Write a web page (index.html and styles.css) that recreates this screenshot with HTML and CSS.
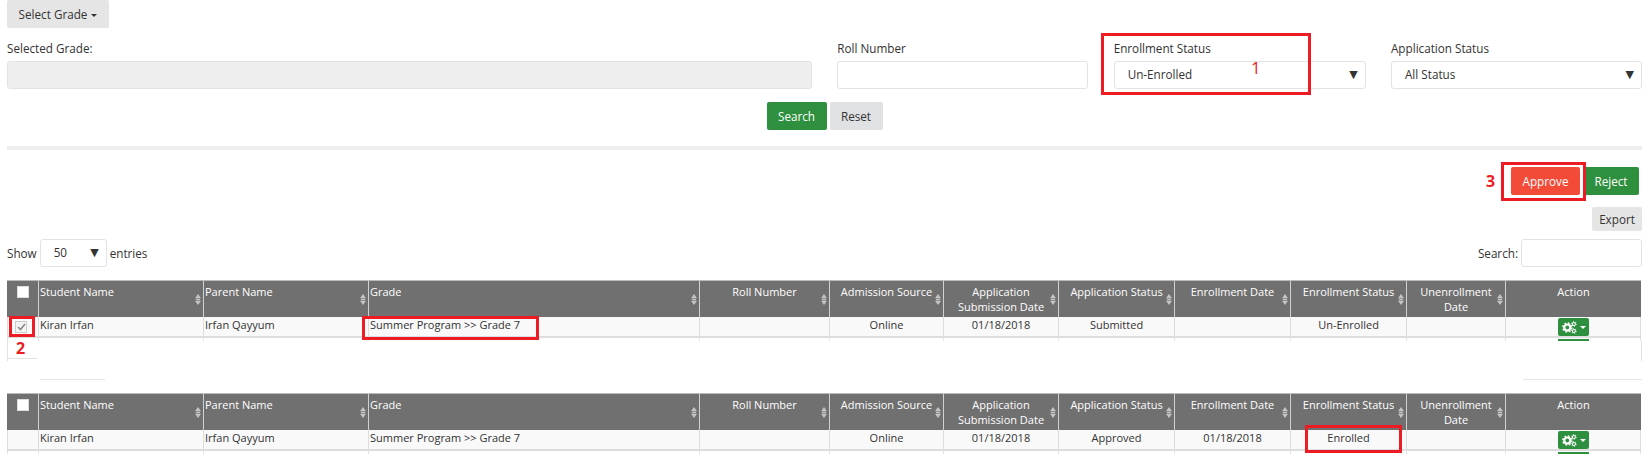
FILE: index.html
```html
<!DOCTYPE html>
<html lang="en">
<head>
<meta charset="utf-8">
<title>Enrollment</title>
<link rel="stylesheet" href="styles.css">
</head>
<body>
<svg class="defs" width="0" height="0" aria-hidden="true">
  <symbol id="sort" viewBox="0 0 6 11"><path d="M3 0 6 4.2H0ZM0 6.8h6L3 11Z" fill="#c4c4c4"/><rect x="1" y="4.8" width="4" height="1.4" fill="#c4c4c4"/></symbol>
  <symbol id="cogs" viewBox="0 0 17 14">
    <circle cx="6" cy="7" r="3.4" fill="none" stroke="#fff" stroke-width="2.4"/>
    <circle cx="6" cy="7" r="5" fill="none" stroke="#fff" stroke-width="1.8" stroke-dasharray="2 1.93"/>
    <circle cx="13.5" cy="3" r="1.7" fill="none" stroke="#fff" stroke-width="1.2"/>
    <circle cx="13.5" cy="3" r="2.7" fill="none" stroke="#fff" stroke-width="1" stroke-dasharray="1.2 1.4"/>
    <circle cx="13.5" cy="11" r="1.7" fill="none" stroke="#fff" stroke-width="1.2"/>
    <circle cx="13.5" cy="11" r="2.7" fill="none" stroke="#fff" stroke-width="1" stroke-dasharray="1.2 1.4"/>
  </symbol>
</svg>

<div class="top"><button class="btn btn-grey btn-grade">Select Grade <span class="caret"></span></button></div>

<div class="filters">
  <div class="field field-grade"><label>Selected Grade:</label><div class="input input-disabled"></div></div>
  <div class="field"><label>Roll Number</label><div class="input"></div></div>
  <div class="field field-wide"><label>Enrollment Status</label><div class="input select"><span>Un-Enrolled</span><span class="arrow">▼</span></div></div>
  <div class="field"><label>Application Status</label><div class="input select"><span>All Status</span><span class="arrow">▼</span></div></div>
</div>

<div class="search-row">
  <button class="btn btn-green btn-search">Search</button>
  <button class="btn btn-light btn-reset">Reset</button>
</div>

<div class="divider"></div>

<div class="approve-row">
  <button class="btn btn-red btn-approve">Approve</button>
  <button class="btn btn-green btn-reject">Reject</button>
</div>
<div class="export-row"><button class="btn btn-grey btn-export">Export</button></div>

<div class="tools">
  <div class="show">Show <div class="input select select-len"><span>50</span><span class="arrow">▼</span></div> entries</div>
  <div class="search">Search: <div class="input input-search"></div></div>
</div>

<table class="grid">
  <colgroup>
    <col class="c-check"><col class="c-name"><col class="c-name"><col class="c-grade"><col class="c-roll"><col class="c-source"><col class="c-sub"><col class="c-status"><col class="c-status"><col class="c-status"><col class="c-unen"><col class="c-action">
  </colgroup>
  <thead>
    <tr>
      <th class="check"><span class="box"></span></th>
      <th class="left">Student Name<svg class="sort"><use href="#sort"/></svg></th>
      <th class="left">Parent Name<svg class="sort"><use href="#sort"/></svg></th>
      <th class="left">Grade<svg class="sort"><use href="#sort"/></svg></th>
      <th>Roll Number<svg class="sort"><use href="#sort"/></svg></th>
      <th>Admission Source<svg class="sort"><use href="#sort"/></svg></th>
      <th>Application<br>Submission Date<svg class="sort"><use href="#sort"/></svg></th>
      <th>Application Status<svg class="sort"><use href="#sort"/></svg></th>
      <th>Enrollment Date<svg class="sort"><use href="#sort"/></svg></th>
      <th>Enrollment Status<svg class="sort"><use href="#sort"/></svg></th>
      <th>Unenrollment<br>Date<svg class="sort"><use href="#sort"/></svg></th>
      <th>Action</th>
    </tr>
  </thead>
  <tbody>
    <tr class="row">
      <td class="check"><span class="box box-checked"><svg width="9" height="8" viewBox="0 0 9 8"><path d="M1 4l2.5 2.5L8 1" fill="none" stroke="#888" stroke-width="1.6"/></svg></span></td>
      <td class="left">Kiran Irfan</td><td class="left">Irfan Qayyum</td><td class="left">Summer Program &gt;&gt; Grade 7</td>
      <td></td><td>Online</td><td>01/18/2018</td><td>Submitted</td><td></td><td>Un-Enrolled</td><td></td>
      <td class="action"><button class="gear"><svg class="cogs"><use href="#cogs"/></svg><span class="caret caret-white"></span></button></td>
    </tr>
    <tr class="stub"><td></td><td></td><td></td><td></td><td></td><td></td><td></td><td></td><td></td><td></td><td></td><td><div class="gear-stub"></div></td></tr>
  </tbody>
</table>

<div class="gap">
  <div class="gap-left"></div>
  <div class="gap-mid"></div>
  <div class="gap-right"></div>
</div>

<table class="grid">
  <colgroup>
    <col class="c-check"><col class="c-name"><col class="c-name"><col class="c-grade"><col class="c-roll"><col class="c-source"><col class="c-sub"><col class="c-status"><col class="c-status"><col class="c-status"><col class="c-unen"><col class="c-action">
  </colgroup>
  <thead>
    <tr>
      <th class="check"><span class="box"></span></th>
      <th class="left">Student Name<svg class="sort"><use href="#sort"/></svg></th>
      <th class="left">Parent Name<svg class="sort"><use href="#sort"/></svg></th>
      <th class="left">Grade<svg class="sort"><use href="#sort"/></svg></th>
      <th>Roll Number<svg class="sort"><use href="#sort"/></svg></th>
      <th>Admission Source<svg class="sort"><use href="#sort"/></svg></th>
      <th>Application<br>Submission Date<svg class="sort"><use href="#sort"/></svg></th>
      <th>Application Status<svg class="sort"><use href="#sort"/></svg></th>
      <th>Enrollment Date<svg class="sort"><use href="#sort"/></svg></th>
      <th>Enrollment Status<svg class="sort"><use href="#sort"/></svg></th>
      <th>Unenrollment<br>Date<svg class="sort"><use href="#sort"/></svg></th>
      <th>Action</th>
    </tr>
  </thead>
  <tbody>
    <tr class="row">
      <td class="check"></td>
      <td class="left">Kiran Irfan</td><td class="left">Irfan Qayyum</td><td class="left">Summer Program &gt;&gt; Grade 7</td>
      <td></td><td>Online</td><td>01/18/2018</td><td>Approved</td><td>01/18/2018</td><td>Enrolled</td><td></td>
      <td class="action"><button class="gear"><svg class="cogs"><use href="#cogs"/></svg><span class="caret caret-white"></span></button></td>
    </tr>
    <tr class="stub"><td></td><td></td><td></td><td></td><td></td><td></td><td></td><td></td><td></td><td></td><td></td><td><div class="gear-stub"></div></td></tr>
  </tbody>
</table>

<div class="mark mark-1"></div><span class="num num-1">1</span>
<div class="mark mark-2"></div><span class="num num-2">2</span>
<div class="mark mark-3"></div><span class="num num-3">3</span>
<div class="mark mark-grade"></div>
<div class="mark mark-enrolled"></div>
</body>
</html>
```

FILE: styles.css
```css
* { box-sizing: border-box; }
html, body { margin: 0; }
body {
  position: relative;
  height: 467px;
  overflow: hidden;
  padding: 0 6px 0 7px;
  background: #fff;
  color: #333;
  font-family: "Open Sans", "Liberation Sans", sans-serif;
  font-size: 11.7px;
  line-height: 15px;
}
.defs { position: absolute; }

.btn {
  border: 0;
  border-radius: 2px;
  padding: 0;
  font: inherit;
  color: #333;
  height: 28px;
}
.btn-grey { background: #e5e5e5; }
.btn-light { background: #e0e1e3; }
.btn-green { background: #2e8f3e; color: #fff; }
.btn-red { background: #f44b38; color: #fff; }
.btn-grade { width: 102px; display: block; }
.btn-search { width: 60px; }
.btn-reset { width: 53px; }
.btn-approve { width: 69px; }
.btn-reject { width: 56px; }
.btn-export { width: 50px; height: 24px; }

.caret {
  display: inline-block;
  width: 0;
  height: 0;
  margin-left: 1px;
  vertical-align: 2px;
  border-top: 3px solid #333;
  border-left: 3px solid transparent;
  border-right: 3px solid transparent;
}
.caret-white { border-top-color: #fff; }

.filters {
  display: flex;
  justify-content: space-between;
  margin-top: 13px;
}
.field { width: 251px; }
.field-wide { width: 252px; }
.field-grade { width: 805px; }
.field label { display: block; height: 20px; }
.input {
  height: 28px;
  background: #fff;
  border: 1px solid #e3e3e3;
  border-radius: 3px;
}
.input-disabled { background: #eee; }
.select {
  display: flex;
  justify-content: space-between;
  align-items: center;
  padding: 0 7px 1px 13px;
}
.arrow { font-family: "DejaVu Sans", sans-serif; font-size: 11px; color: #333; }

.search-row {
  display: flex;
  justify-content: center;
  gap: 3px;
  margin-top: 13px;
}
.divider { height: 4px; margin-top: 16px; background: #eee; }

.approve-row {
  display: flex;
  justify-content: flex-end;
  gap: 3px;
  margin-top: 17px;
  padding-right: 3px;
}
.export-row {
  display: flex;
  justify-content: flex-end;
  margin-top: 12px;
}
.tools {
  display: flex;
  justify-content: space-between;
  align-items: center;
  margin-top: 8px;
}
.show, .search { display: flex; align-items: center; }
.select-len {
  width: 67px;
  margin: 0 3px;
}
.input-search { width: 121px; margin-left: 3px; }

.grid {
  width: 1634px;
  margin-top: 13px;
  table-layout: fixed;
  border-collapse: separate;
  border-spacing: 0;
  font-size: 11px;
}
.c-check { width: 31px; }
.c-name { width: 165px; }
.c-grade { width: 331px; }
.c-roll { width: 130px; }
.c-source { width: 114px; }
.c-sub { width: 115px; }
.c-status { width: 116px; }
.c-unen { width: 99px; }
.c-action { width: 136px; }

.grid th {
  position: relative;
  height: 37px;
  padding: 3px 2px 0;
  vertical-align: top;
  background: #707070;
  color: #fff;
  font-weight: 400;
  text-align: center;
  border-top: 1px solid #bbb;
  border-left: 1px solid #d0d0d0;
}
.grid th:first-child { border-left: 0; }
.grid th.left, .grid td.left { padding-left: 1px; text-align: left; }
.sort {
  position: absolute;
  right: 2px;
  top: 13px;
  width: 6px;
  height: 11px;
}
.check { text-align: center; }
.box {
  display: inline-block;
  width: 12px;
  height: 12px;
  background: #fff;
  border: 1px solid #ddd;
}
.grid th.check { padding: 5px 0 0; }
.box-checked {
  display: flex;
  align-items: center;
  justify-content: center;
  margin: 0 0 0 7px;
  background: #f3f3f3;
  border-color: #ccc;
}

.row td {
  height: 20px;
  padding: 0 2px 4px;
  background: #f9f9f9;
  text-align: center;
  border-left: 1px solid #ddd;
  border-bottom: 2px solid #ddd;
  white-space: nowrap;
}
.row td:first-child { padding: 0; }
.row td.action { padding: 0; vertical-align: top; border-right: 1px solid #ddd; }
.stub td { height: 3px; padding: 0; line-height: 0; border-left: 1px solid #e3e3e3; }
.stub td:last-child { border-right: 1px solid #e3e3e3; }
.gear {
  display: flex;
  align-items: center;
  justify-content: center;
  gap: 2px;
  width: 31px;
  height: 18px;
  margin: 1px 0 0 52px;
  padding: 0;
  border: 0;
  border-radius: 2px;
  background: #2e8f3e;
}
.cogs { width: 15px; height: 13px; }
.gear-stub { width: 31px; height: 2px; margin: 1px 0 0 52px; background: #2e8f3e; }

.gap {
  display: flex;
  justify-content: space-between;
  align-items: flex-start;
  height: 39px;
}
.gap-left {
  width: 30px;
  height: 20px;
  border-left: 1px solid #e3e3e3;
  background: linear-gradient(#e3e3e3, #e3e3e3) 0 17px / 100% 1px no-repeat;
}
.gap-mid { width: 65px; height: 1px; margin: 38px auto 0 3px; background: #e6e6e6; }
.gap-right {
  width: 119px;
  height: 39px;
  background:
    linear-gradient(#e6e6e6, #e6e6e6) 0 38px / 100% 1px no-repeat,
    linear-gradient(#e3e3e3, #e3e3e3) 100% 0 / 1px 20px no-repeat;
}

.mark { position: absolute; border: 3px solid #ed1c24; }
.mark-1 { left: 1101px; top: 33px; width: 210px; height: 62px; }
.mark-2 { left: 9px; top: 316px; width: 26px; height: 21px; }
.mark-3 { left: 1501px; top: 162px; width: 85px; height: 39px; }
.mark-grade { left: 362px; top: 316px; width: 177px; height: 24px; }
.mark-enrolled { left: 1305px; top: 425px; width: 97px; height: 28px; }
.num { position: absolute; color: #ed1c24; }
.num-1 { left: 1251px; top: 59px; font-size: 17px; line-height: 18px; }
.num-2 { left: 16px; top: 339px; font-size: 16px; line-height: 18px; font-weight: 700; }
.num-3 { left: 1486px; top: 172px; font-size: 16px; line-height: 18px; font-weight: 700; }
```
